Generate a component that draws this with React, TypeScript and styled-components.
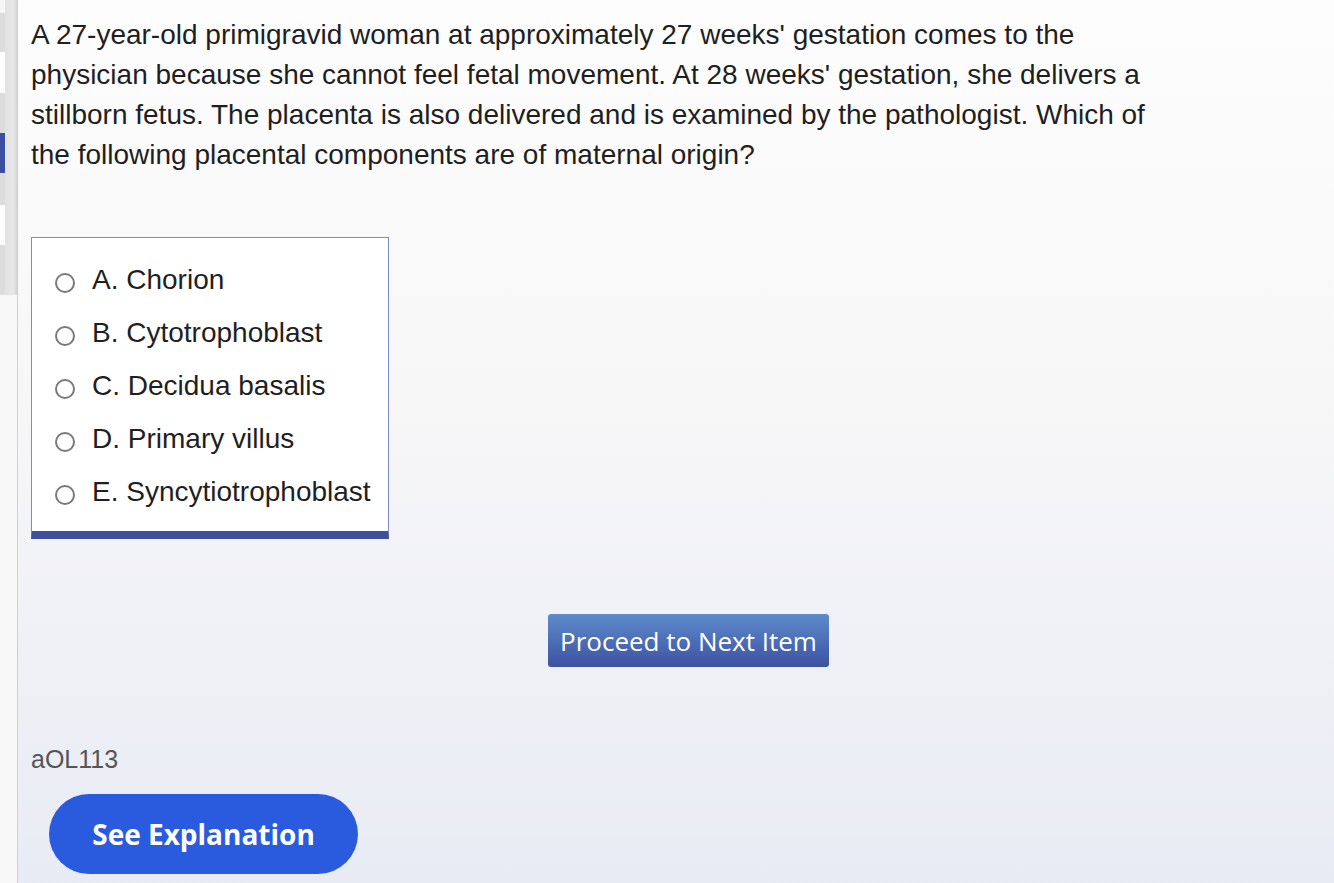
import React from 'react';
import styled, { createGlobalStyle } from 'styled-components';

const GlobalStyle = createGlobalStyle`
    html, body {
        margin: 0;
        padding: 0;
        height: 100%;
    }
    body {
        font-family: "Liberation Sans", Arial, sans-serif;
        overflow: hidden;
    }
`

const Page = styled.div`
    display: flex;
    width: 1334px;
    height: 883px;
    background: linear-gradient(#fdfdfd 0%, #f7f7f8 45%, #e9ebf4 100%);
`

const Sidebar = styled.div`
    width: 17px;
    flex-shrink: 0;
    display: flex;
    border-right: 1px solid #cfcfcf;
    background: #f8f8f8;
`

const Items = styled.div`
    width: 5px;
    display: flex;
    flex-direction: column;
`

const Item = styled.div<{ $h: number; $c: string }>`
    height: ${p => p.$h}px;
    background: ${p => p.$c};
`

const Scroll = styled.div`
    width: 12px;
    height: 295px;
    background: linear-gradient(90deg, #e2e2e2 0%, #e6e6e6 70%, #d6d6d6 100%);
`

const Main = styled.div`
    flex: 1;
    padding: 15px 0 0 13px;
    display: flex;
    flex-direction: column;
`

const Question = styled.p`
    margin: 0;
    width: 1140px;
    font-size: 28px;
    line-height: 40px;
    color: #1f1f1f;
`

const Options = styled.div`
    margin-top: 62px;
    width: 358px;
    background: #fff;
    border: 1px solid #7f89c6;
    border-bottom: 8px solid #3e4f9e;
    padding: 15px 0 13px;
    box-sizing: border-box;
    display: flex;
    flex-direction: column;
`

const Option = styled.label`
    display: flex;
    align-items: center;
    height: 53px;
    flex-shrink: 0;
    font-size: 28px;
    color: #1f1f1f;
    cursor: pointer;
`

const Radio = styled.span`
    width: 20px;
    height: 20px;
    border: 2px solid #7a7a7a;
    border-radius: 50%;
    margin: 6px 17px 0 23px;
    box-sizing: border-box;
    background: #fff;
    flex-shrink: 0;
`

const ProceedRow = styled.div`
    margin-top: 75px;
    padding-left: 517px;
`

const ProceedButton = styled.button`
    width: 281px;
    height: 53px;
    border: none;
    border-radius: 3px;
    background: linear-gradient(#5d8bcb, #3d52a2);
    color: #fff;
    font-family: "Open Sans", sans-serif;
    font-size: 26px;
    padding: 0;
    cursor: pointer;
`

const ItemId = styled.div`
    margin-top: 77px;
    font-size: 25px;
    color: #555;
    line-height: 30px;
`

const ExplainButton = styled.button`
    margin: 20px 0 0 18px;
    width: 309px;
    height: 80px;
    border: none;
    border-radius: 40px;
    background: #2a5bde;
    color: #fff;
    font-family: "Open Sans", sans-serif;
    font-weight: 700;
    font-size: 28px;
    cursor: pointer;
`

const sideItems = [
    { h: 13, c: '#f6f6f6' },
    { h: 39, c: '#dcdcdc' },
    { h: 41, c: '#ffffff' },
    { h: 40, c: '#dcdcdc' },
    { h: 40, c: '#3b4fa1' },
    { h: 32, c: '#dcdcdc' },
    { h: 40, c: '#ffffff' },
    { h: 50, c: '#dcdcdc' },
]

const choices = [
    'A. Chorion',
    'B. Cytotrophoblast',
    'C. Decidua basalis',
    'D. Primary villus',
    'E. Syncytiotrophoblast',
]

const App = () => {
    return (
        <>
            <GlobalStyle />
            <Page>
                <Sidebar>
                    <Items>
                        {sideItems.map((s, i) => <Item key={i} $h={s.h} $c={s.c} />)}
                    </Items>
                    <Scroll />
                </Sidebar>
                <Main>
                    <Question>
                        A 27-year-old primigravid woman at approximately 27 weeks' gestation comes to the
                        physician because she cannot feel fetal movement. At 28 weeks' gestation, she delivers a
                        stillborn fetus. The placenta is also delivered and is examined by the pathologist. Which of
                        the following placental components are of maternal origin?
                    </Question>
                    <Options>
                        {choices.map(c => (
                            <Option key={c}>
                                <Radio />
                                {c}
                            </Option>
                        ))}
                    </Options>
                    <ProceedRow>
                        <ProceedButton>Proceed to Next Item</ProceedButton>
                    </ProceedRow>
                    <ItemId>aOL113</ItemId>
                    <div>
                        <ExplainButton>See Explanation</ExplainButton>
                    </div>
                </Main>
            </Page>
        </>
    )
}

export default App
